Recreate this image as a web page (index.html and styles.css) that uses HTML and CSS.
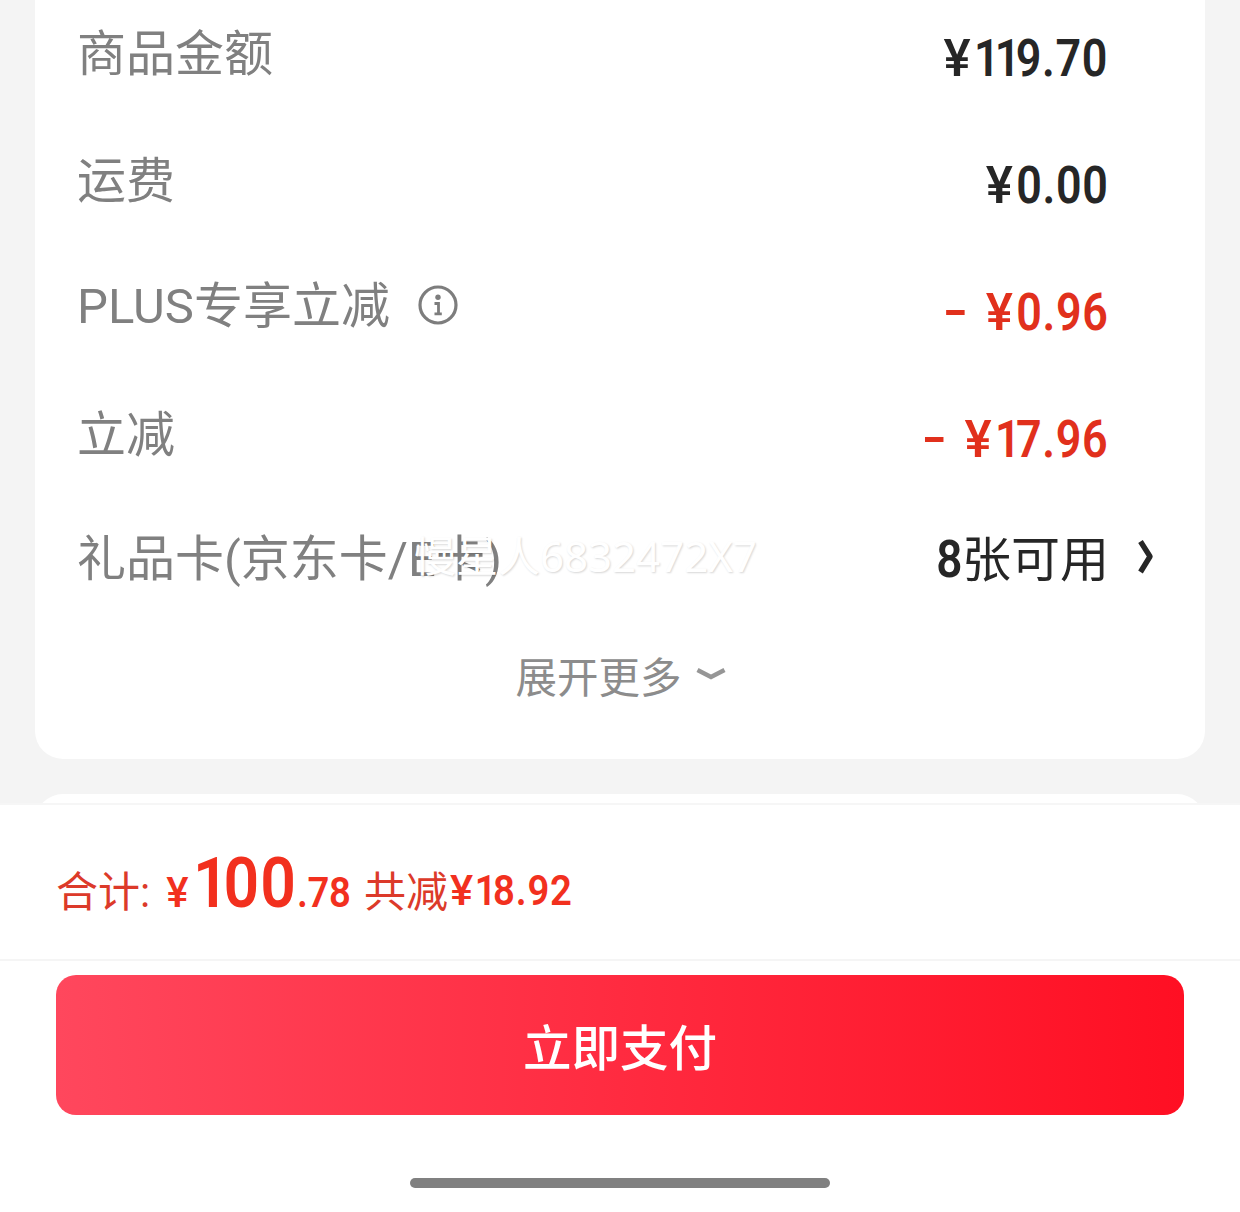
FILE: index.html
```html
<!DOCTYPE html>
<html lang="zh-CN">
<head>
<meta charset="utf-8">
<title>确认订单</title>
<link rel="stylesheet" href="styles.css">
</head>
<body>
<main class="screen">
  <section class="content">
    <div class="card summary">
      <div class="row">
        <span class="label">商品金额</span>
        <span class="value price"><span class="sign">¥</span><span class="one">1</span><span class="one">1</span>9.70</span>
      </div>
      <div class="row">
        <span class="label">运费</span>
        <span class="value price"><span class="sign">¥</span>0.00</span>
      </div>
      <div class="row">
        <span class="label"><span class="latin">PLUS</span>专享立减</span>
        <svg class="info" viewBox="0 0 40 40" width="40" height="40">
          <circle cx="20" cy="20" r="18" fill="none" stroke="#7d7d7d" stroke-width="3.2"/>
          <circle cx="20" cy="12.3" r="2.7" fill="#7d7d7d"/>
          <path d="M16.5 18.5H20.5V28.5M16.5 28.8H23.8" fill="none" stroke="#7d7d7d" stroke-width="2.8"/>
        </svg>
        <span class="value price discount"><span class="minus"></span><span class="sign">¥</span>0.96</span>
      </div>
      <div class="row">
        <span class="label">立减</span>
        <span class="value price discount"><span class="minus"></span><span class="sign">¥</span><span class="one">1</span>7.96</span>
      </div>
      <div class="row gift">
        <span class="label">礼品卡<span class="latin">(</span>京东卡<span class="latin">/E</span>卡<span class="latin">)</span></span>
        <span class="value cards"><span class="count">8</span><span class="cjk">张可用</span></span>
        <svg class="arrow" viewBox="0 0 18 38" width="18" height="38">
          <path d="M3.5 3.5L13 18.5L3.5 34" fill="none" stroke="#262626" stroke-width="5.4" stroke-linejoin="round"/>
        </svg>
        <span class="watermark">慢星人6832472X7</span>
      </div>
      <div class="more">
        <span>展开更多</span>
        <svg viewBox="0 0 30 14" width="30" height="14">
          <path d="M1.5 3L15 10L28.5 3" fill="none" stroke="#969696" stroke-width="4.4"/>
        </svg>
      </div>
    </div>
    <div class="card next"></div>
  </section>
  <section class="total">
    <span class="total-label">合计<span class="latin">:</span></span>
    <span class="yen">¥</span>
    <span class="big"><span class="one">1</span>00</span>
    <span class="cents">.78</span>
    <span class="total-label saved">共减</span>
    <span class="cents saved-value"><span class="sign">¥</span><span class="one">1</span>8.92</span>
  </section>
  <footer class="footer">
    <button class="pay">立即支付</button>
    <div class="home-bar"></div>
  </footer>
</main>
</body>
</html>
```
FILE: styles.css
```css
* { box-sizing: border-box; }
body {
  margin: 0;
  background: #fff;
  font-family: "Noto Sans CJK SC", sans-serif;
}
.screen {
  width: 1240px;
  height: 1212px;
  overflow: hidden;
  display: flex;
  flex-direction: column;
}
.content {
  height: 805px;
  flex: none;
  overflow: hidden;
  background: #f4f4f4;
  padding: 0 35px;
  border-bottom: 2px solid #f6f6f6;
}
.card { background: #fff; }
.summary {
  height: 759px;
  border-radius: 0 0 28px 28px;
  padding: 0 42px;
}
.next {
  height: 60px;
  margin-top: 35px;
  border-radius: 28px;
}
.row {
  position: relative;
  display: flex;
  align-items: center;
  height: 127px;
}
.row:first-child {
  height: 117px;
  padding-bottom: 10px;
}
.label {
  padding-bottom: 7px;
  font-size: 49px;
  line-height: 70px;
  color: #808080;
  white-space: nowrap;
}
.latin { font-family: Roboto, sans-serif; }
.value {
  margin-left: auto;
  padding-top: 10px;
  display: flex;
  align-items: baseline;
  font: 500 51px/60px Roboto, sans-serif;
  color: #262626;
}
/* narrow, DIN-like figures */
.price {
  margin-right: 55px;
  font-weight: 600;
  letter-spacing: .75px;
  transform: scaleX(.88);
  transform-origin: right;
}
.sign {
  display: inline-block;
  letter-spacing: 0;
  margin-right: 7.5px;
  font-weight: 500;
  transform: scaleX(1.14);
  transform-origin: left;
}
.one { letter-spacing: -5.4px; }
.price.discount { color: #e1301c; }
.minus {
  width: 21px;
  height: 5px;
  margin-right: 24px;
  align-self: center;
  background: currentColor;
}
.info {
  margin-left: 28px;
  margin-bottom: 6px;
}
.gift { height: 126px; }
.cards {
  margin-right: 28px;
  padding-top: 0;
  padding-bottom: 7px;
}
.count {
  font-weight: 600;
  letter-spacing: -2px;
  transform: scaleX(.9);
}
.cjk { font: 400 49px/60px "Noto Sans CJK SC", sans-serif; }
.arrow {
  margin-right: 8px;
  margin-bottom: 8px;
}
.watermark {
  position: absolute;
  left: 337px;
  top: 28px;
  font: 400 42px/60px "Noto Sans", "Noto Sans CJK SC", sans-serif;
  color: #fff;
  text-shadow: 1px 1px 2px rgba(0, 0, 0, .16);
  white-space: nowrap;
}
.more {
  display: flex;
  align-items: center;
  justify-content: center;
  gap: 14px;
  margin-top: 21px;
  padding-left: 1px;
  font-size: 41.5px;
  line-height: 60px;
  color: #8c8c8c;
}
.more svg { margin-bottom: 3px; }
.total {
  display: flex;
  align-items: baseline;
  height: 156px;
  flex: none;
  padding: 38px 56px 0;
  border-bottom: 2px solid #f5f5f5;
  color: #f2301e;
  white-space: nowrap;
  font-family: Roboto, sans-serif;
  line-height: 80px;
}
.total-label {
  font-family: "Noto Sans CJK SC", sans-serif;
  font-size: 42px;
  color: #dc3a2a;
}
.yen {
  margin-left: 16px;
  font-size: 42px;
  font-weight: 500;
}
.big {
  margin-left: 4px;
  margin-right: -14px;
  font-size: 71px;
  font-weight: 600;
  letter-spacing: 1.2px;
  transform: scaleX(.88);
  transform-origin: left;
}
.big .one { letter-spacing: -6px; }
.cents {
  margin-right: -7px;
  font-size: 42.5px;
  font-weight: 600;
  letter-spacing: -.4px;
  transform: scaleX(.9);
  transform-origin: left;
}
.saved { margin-left: 15px; }
.saved-value {
  margin-left: 2px;
  letter-spacing: .9px;
  transform: translateY(-2px) scaleX(.9);
}
.saved-value .sign { margin-right: 5px; }
.saved-value .one { letter-spacing: -4px; }
.footer {
  display: flex;
  flex-direction: column;
  align-items: center;
  padding-top: 14px;
}
.pay {
  width: 1128px;
  height: 140px;
  border: 0;
  border-radius: 20px;
  padding: 0 0 1px;
  background: linear-gradient(90deg, #ff475d, #ff0f23);
  color: #fff;
  font: 500 48.5px/70px "Noto Sans CJK SC", sans-serif;
}
.home-bar {
  width: 420px;
  height: 10px;
  margin-top: 63px;
  border-radius: 5px;
  background: #808080;
}
```
